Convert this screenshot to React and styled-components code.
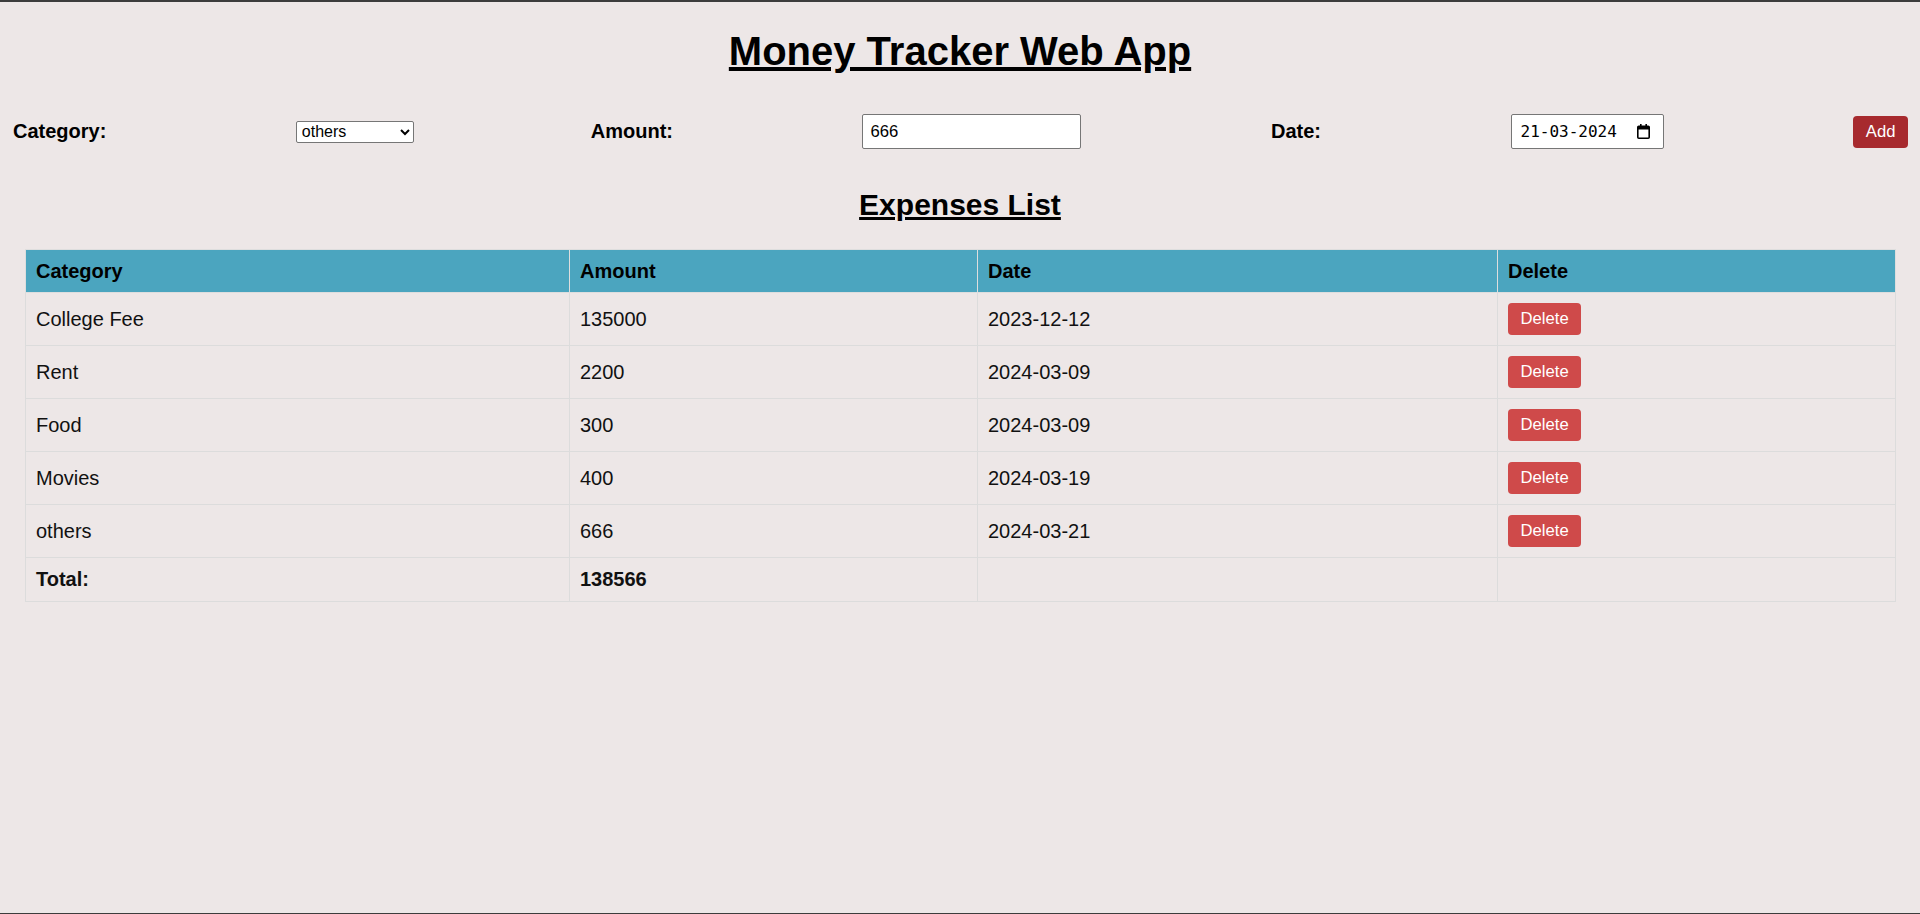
import styled, { createGlobalStyle } from "styled-components";

const GlobalStyle = createGlobalStyle`
  html, body {
    margin: 0;
    padding: 0;
    background-color: #ede7e7;
  }
  body {
    font-family: "Liberation Sans", Arial, sans-serif;
    color: #000;
  }
`;

const Page = styled.div`
  min-height: 100vh;
  box-sizing: border-box;
  border-top: 2px solid #3c3c3c;
  border-bottom: 1px solid #3c3c3c;
  display: flex;
  flex-direction: column;
`;
const Title = styled.h1`
  margin: 26px 0 0;
  font-size: 40px;
  line-height: 46px;
  font-weight: bold;
  text-align: center;
  text-decoration: underline;
`;
const Form = styled.form`
  display: flex;
  align-items: center;
  gap: 189.5px;
  height: 35px;
  margin-top: 40px;
  padding: 0 12px 0 13px;
`;
const Label = styled.label`
  font-size: 20px;
  font-weight: bold;
`;
const Select = styled.select`
  width: 119px;
  height: 22px;
  margin-right: -13px;
  box-sizing: border-box;
  font-family: "Liberation Sans", Arial, sans-serif;
  font-size: 16px;
  color: #000;
  background-color: #fff;
  border: 1px solid #767676;
  border-radius: 2px;
  padding: 0 1px;
`;
const TextInput = styled.input`
  width: 219px;
  height: 35px;
  box-sizing: border-box;
  padding: 0 7px;
  font-family: "Liberation Sans", Arial, sans-serif;
  font-size: 16.67px;
  color: #000;
  background-color: #fff;
  border: 1px solid #767676;
  border-radius: 2px;
`;
const DateBox = styled.div`
  width: 154px;
  height: 35px;
  box-sizing: border-box;
  display: flex;
  align-items: center;
  justify-content: space-between;
  padding: 0 13px 0 9px;
  background-color: #fff;
  border: 1px solid #767676;
  border-radius: 2px;
`;
const DateText = styled.span`
  font-family: "DejaVu Sans Mono", "Liberation Mono", monospace;
  font-size: 16px;
  color: #000;
`;
const Button = styled.button`
  height: 32px;
  padding: 0 12.5px;
  border: none;
  border-radius: 4px;
  background-color: ${(p) => (p.$tone === "dark" ? "#a72a2e" : "#cf4a4a")};
  color: #fff;
  font-family: "Liberation Sans", Arial, sans-serif;
  font-size: 16.67px;
  cursor: pointer;
`;
const SubTitle = styled.h2`
  margin: 39px 0 0;
  font-size: 30px;
  line-height: 34px;
  font-weight: bold;
  text-align: center;
  text-decoration: underline;
`;
const Table = styled.table`
  margin: 27px 0 0 25px;
  width: 1870px;
  border-collapse: collapse;
  table-layout: fixed;
`;
const Th = styled.th`
  background-color: #4ba5bf;
  text-align: left;
  padding: 10px;
  font-size: 20px;
  line-height: 22px;
  font-weight: bold;
  border: 1px solid #dedede;
`;
const Td = styled.td`
  padding: 10px;
  font-size: 20px;
  line-height: 23px;
  color: #111;
  border: 1px solid #dcdcdc;
  font-weight: ${(p) => (p.$bold ? "bold" : "normal")};
`;

function CalendarIcon() {
  return (
    <svg width="13" height="15" viewBox="0 0 13 15" fill="none">
      <rect x="3" y="0" width="1.6" height="3" fill="#000" />
      <rect x="8.4" y="0" width="1.6" height="3" fill="#000" />
      <rect x="0.8" y="2.3" width="11.4" height="11.9" rx="1" stroke="#000" strokeWidth="1.6" />
      <rect x="0.8" y="2.3" width="11.4" height="3.2" fill="#000" />
    </svg>
  );
}

const expenses = [
  { category: "College Fee", amount: 135000, date: "2023-12-12" },
  { category: "Rent", amount: 2200, date: "2024-03-09" },
  { category: "Food", amount: 300, date: "2024-03-09" },
  { category: "Movies", amount: 400, date: "2024-03-19" },
  { category: "others", amount: 666, date: "2024-03-21" },
];

export default function App() {
  const total = expenses.reduce((sum, e) => sum + e.amount, 0);

  return (
    <>
      <GlobalStyle />
      <Page>
        <Title>Money Tracker Web App</Title>
        <Form onSubmit={(e) => e.preventDefault()}>
          <Label>Category:</Label>
          <Select defaultValue="others">
            <option value="College Fee">College Fee</option>
            <option value="Rent">Rent</option>
            <option value="Food">Food</option>
            <option value="Movies">Movies</option>
            <option value="others">others</option>
          </Select>
          <Label>Amount:</Label>
          <TextInput type="text" defaultValue="666" />
          <Label>Date:</Label>
          <DateBox>
            <DateText>21-03-2024</DateText>
            <CalendarIcon />
          </DateBox>
          <Button $tone="dark" type="submit">Add</Button>
        </Form>
        <SubTitle>Expenses List</SubTitle>
        <Table>
          <colgroup>
            <col style={{ width: 544 }} />
            <col style={{ width: 408 }} />
            <col style={{ width: 520 }} />
            <col style={{ width: 398 }} />
          </colgroup>
          <thead>
            <tr>
              <Th>Category</Th>
              <Th>Amount</Th>
              <Th>Date</Th>
              <Th>Delete</Th>
            </tr>
          </thead>
          <tbody>
            {expenses.map((e) => (
              <tr key={e.category}>
                <Td>{e.category}</Td>
                <Td>{e.amount}</Td>
                <Td>{e.date}</Td>
                <Td>
                  <Button>Delete</Button>
                </Td>
              </tr>
            ))}
            <tr>
              <Td $bold>Total:</Td>
              <Td $bold>{total}</Td>
              <Td></Td>
              <Td></Td>
            </tr>
          </tbody>
        </Table>
      </Page>
    </>
  );
}
